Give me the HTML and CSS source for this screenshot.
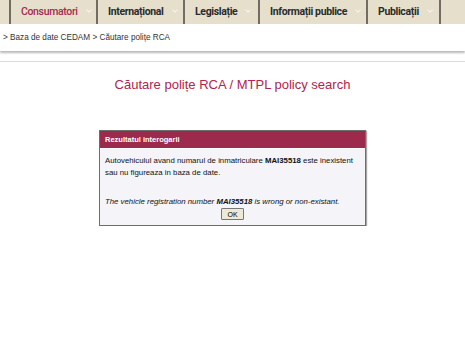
FILE: index.html
```html
<!DOCTYPE html>
<html>
<head>
<meta charset="utf-8">
<link rel="stylesheet" href="styles.css">
</head>
<body>
<nav class="nav">
  <div class="nav-item active">Consumatori<span class="chev"></span></div>
  <div class="nav-item">Internațional<span class="chev"></span></div>
  <div class="nav-item">Legislație<span class="chev"></span></div>
  <div class="nav-item">Informații publice<span class="chev"></span></div>
  <div class="nav-item">Publicații<span class="chev"></span></div>
  <div class="nav-end"></div>
</nav>
<div class="crumbs">&gt; Baza de date CEDAM &gt; Căutare polițe RCA</div>
<div class="rule"></div>
<h1 class="title">Căutare polițe RCA / MTPL policy search</h1>
<div class="dialog">
  <div class="dialog-head">Rezultatul interogarii</div>
  <div class="dialog-body">
    <p>Autovehiculul avand numarul de inmatriculare <b>MAI35518</b> este inexistent sau nu figureaza in baza de date.</p>
    <p class="en"><i>The vehicle registration number <b>MAI35518</b> is wrong or non-existant.</i></p>
    <div class="actions"><button class="ok">OK</button></div>
  </div>
</div>
</body>
</html>
```
FILE: styles.css
```css
html, body { margin: 0; padding: 0; background: #fff; }
body { font-family: "Liberation Sans", Arial, sans-serif; }

.nav {
  display: flex;
  height: 24px;
  background: #e5dfcc;
  padding-left: 9px;
}
.nav-item {
  display: flex;
  align-items: center;
  white-space: nowrap;
  border-left: 2px solid #726d62;
  font-family: Roboto, "Liberation Sans", sans-serif;
  font-weight: bold;
  font-size: 10.5px;
  letter-spacing: -0.35px;
  color: #2b2b2b;
  padding: 0 0 1px 10px;
  box-sizing: border-box;
  overflow: hidden;
}
.nav-item:nth-child(1) { width: 87px; }
.nav-item:nth-child(2) { width: 87px; }
.nav-item:nth-child(3) { width: 75px; }
.nav-item:nth-child(4) { width: 108px; }
.nav-item:nth-child(5) { width: 73px; }
.nav-item.active { color: #a7284f; font-weight: 500; }
.nav-end { border-left: 2px solid #726d62; flex: 1; }
.chev {
  display: inline-block;
  width: 3px; height: 3px;
  border-right: 1px solid #f7f4ec;
  border-bottom: 1px solid #f7f4ec;
  transform: rotate(45deg);
  margin: 0 0 3px 9px;
}

.crumbs {
  height: 27px;
  line-height: 27px;
  padding-left: 3px;
  font-size: 8.2px;
  color: #333;
  background: #fff;
  box-shadow: 0 2px 2px rgba(0,0,0,0.28);
  position: relative;
}
.rule {
  margin-top: 10px;
  border-top: 1px solid #dedede;
}
.title {
  margin: 14px 0 0;
  text-align: center;
  font-weight: normal;
  font-size: 13px;
  color: #b3234d;
  line-height: 17px;
}
.dialog {
  margin: 37px 0 0 99px;
  width: 265px;
  border: 1px solid #6d6d6d;
  box-shadow: 1px 1px 1px rgba(0,0,0,0.35);
  background: #f4f4f9;
}
.dialog-head {
  background: #9c2a4c;
  color: #fff;
  font-weight: bold;
  font-size: 7.5px;
  height: 17px;
  line-height: 17px;
  padding-left: 5px;
  border-bottom: 1px solid #fff;
}
.dialog-body {
  padding: 6px 5px 5px;
  font-size: 7.8px;
  line-height: 12px;
  color: #111;
}
.dialog-body p { margin: 0; }
.dialog-body .en { margin-top: 17px; }
.actions { display: flex; justify-content: center; }
.ok {
  font-family: "Liberation Sans", Arial, sans-serif;
  font-size: 7px;
  padding: 0 5px;
  height: 12px;
  background: #ece9d8;
  border: 1px solid #777;
  border-radius: 1px;
  color: #000;
}
```
